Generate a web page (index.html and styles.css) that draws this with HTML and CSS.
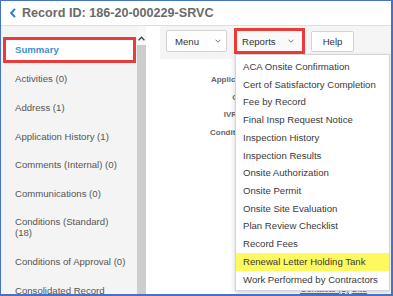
FILE: index.html
```html
<!DOCTYPE html>
<html>
<head>
<meta charset="utf-8">
<link rel="stylesheet" href="styles.css">
</head>
<body>
<div class="frame">
  <header class="hdr">
    <svg class="back" width="6" height="10" viewBox="0 0 6 10"><path d="M5 0.8 L1.2 5 L5 9.2" fill="none" stroke="#2b7fd3" stroke-width="2"/></svg>
    <h1 class="title">Record ID: 186-20-000229-SRVC</h1>
  </header>
  <div class="body">
    <nav class="side">
      <ul class="side-list">
        <li class="side-item active">Summary</li>
        <li class="side-item">Activities (0)</li>
        <li class="side-item">Address (1)</li>
        <li class="side-item">Application History (1)</li>
        <li class="side-item">Comments (Internal) (0)</li>
        <li class="side-item">Communications (0)</li>
        <li class="side-item">Conditions (Standard)<br>(18)</li>
        <li class="side-item">Conditions of Approval (0)</li>
        <li class="side-item">Consolidated Record<br>Activities (1)</li>
      </ul>
    </nav>
    <div class="scroll">
      <div class="scroll-btn">
        <svg width="7" height="5" viewBox="0 0 7 5"><path d="M0.6 4.3 L3.5 1.2 L6.4 4.3" fill="none" stroke="#444" stroke-width="1.3"/></svg>
      </div>
      <div class="scroll-track"></div>
    </div>
    <main class="main">
      <div class="toolbar">
        <button class="btn btn-menu">Menu <svg width="6" height="4" viewBox="0 0 6 4"><path d="M0.5 0.7 L3 3.2 L5.5 0.7" fill="none" stroke="#777" stroke-width="1"/></svg></button>
        <div class="dd">
          <button class="btn btn-reports">Reports <svg width="6" height="4" viewBox="0 0 6 4"><path d="M0.5 0.7 L3 3.2 L5.5 0.7" fill="none" stroke="#777" stroke-width="1"/></svg></button>
          <ul class="dd-menu">
            <li class="dd-item">ACA Onsite Confirmation</li>
            <li class="dd-item">Cert of Satisfactory Completion</li>
            <li class="dd-item">Fee by Record</li>
            <li class="dd-item">Final Insp Request Notice</li>
            <li class="dd-item">Inspection History</li>
            <li class="dd-item">Inspection Results</li>
            <li class="dd-item">Onsite Authorization</li>
            <li class="dd-item">Onsite Permit</li>
            <li class="dd-item">Onsite Site Evaluation</li>
            <li class="dd-item">Plan Review Checklist</li>
            <li class="dd-item">Record Fees</li>
            <li class="dd-item hl">Renewal Letter Holding Tank</li>
            <li class="dd-item">Work Performed by Contractors</li>
          </ul>
        </div>
        <button class="btn btn-help">Help</button>
      </div>
      <div class="form">
        <div class="label">Applicant:</div>
        <div class="label">City:</div>
        <div class="label">IVR ID:</div>
        <div class="label">Condition:</div>
      </div>
      <div class="links"><span class="link">Contacts (1)</span> <span class="link">Site</span></div>
    </main>
  </div>
</div>
</body>
</html>
```

FILE: styles.css
```css
html, body {
  margin: 0;
  padding: 0;
}
body {
  font-family: "Liberation Sans", Arial, sans-serif;
  background: #fff;
}
.frame {
  width: 393px;
  height: 296px;
  box-sizing: border-box;
  border-style: solid;
  border-color: #4472c4;
  border-width: 1px 2px 2px 1px;
  overflow: hidden;
  display: flex;
  flex-direction: column;
  background: #fff;
}
.hdr {
  flex: none;
  height: 24px;
  display: flex;
  align-items: center;
  gap: 6px;
  padding-left: 9px;
  border-bottom: 1px solid #dedede;
}
.back {
  display: block;
}
.title {
  margin: 0;
  font-size: 12.6px;
  font-weight: bold;
  color: #6a6a6a;
  white-space: nowrap;
}
.body {
  flex: 1;
  min-height: 0;
  display: flex;
}
.side {
  flex: none;
  width: 136px;
  background: #f4f4f4;
}
.side-list {
  list-style: none;
  margin: 0;
  padding: 10px 0 0 0;
}
.side-item {
  font-size: 9.6px;
  line-height: 11px;
  color: #555;
  padding: 8.8px 4px 8.8px 14px;
}
.side-item.active {
  margin: 1px 1px 2px 2px;
  border: 3px solid #ea3a3a;
  background: #fff;
  padding: 4.3px 4px 4.3px 9px;
  color: #3d8fd4;
  font-weight: bold;
}
.scroll {
  flex: none;
  width: 9px;
  display: flex;
  flex-direction: column;
  background: #cdcdcd;
}
.scroll-btn {
  flex: none;
  height: 19px;
  background: #f7f7f7;
  display: flex;
  justify-content: center;
  padding-top: 10px;
  box-sizing: border-box;
}
.scroll-btn svg {
  display: block;
}
.scroll-track {
  flex: 1;
}
.main {
  flex: 1;
  min-width: 0;
  padding-left: 14px;
  display: flex;
  flex-direction: column;
}
.toolbar {
  flex: none;
  height: 33px;
  box-sizing: border-box;
  background: #f5f5f5;
  display: flex;
  align-items: flex-start;
  padding: 4px 0 0 6px;
}
.btn {
  font-family: "Liberation Sans", Arial, sans-serif;
  font-size: 9.6px;
  color: #333;
  background: #fff;
  border: 1px solid #d2d2d2;
  border-radius: 2px;
  box-sizing: border-box;
  display: flex;
  align-items: center;
  margin: 0;
}
.btn svg {
  display: block;
}
.btn-menu {
  width: 61px;
  height: 22px;
  justify-content: space-between;
  padding: 0 5px 0 8px;
  margin-right: 7px;
}
.dd {
  position: relative;
  margin-top: -2px;
  margin-right: 6px;
}
.btn-reports {
  width: 71px;
  height: 26px;
  border: 3px solid #ea3a3a;
  border-radius: 0;
  background: #f9f9f9;
  justify-content: space-between;
  padding: 0 8px 0 5px;
}
.btn-help {
  width: 43px;
  height: 21px;
  justify-content: center;
  margin-top: 1px;
}
.dd-menu {
  position: absolute;
  top: 100%;
  left: 1px;
  width: 155px;
  box-sizing: border-box;
  margin: 0;
  padding: 3px 0 1px 0;
  list-style: none;
  background: #fff;
  border: 1px solid #d4d4d4;
  box-shadow: 0 2px 5px rgba(0, 0, 0, 0.18);
  z-index: 2;
}
.dd-item {
  font-size: 9.6px;
  line-height: 17.7px;
  color: #3a3a3a;
  padding-left: 7px;
  white-space: nowrap;
}
.dd-item.hl {
  background: #fdf95e;
  line-height: 18.4px;
}
.form {
  margin-top: 12px;
  display: grid;
  grid-template-columns: 90px;
}
.label {
  font-size: 8px;
  font-weight: bold;
  line-height: 17.5px;
  color: #666;
  text-align: right;
  white-space: nowrap;
}
.links {
  margin-top: auto;
  padding-left: 140px;
  font-size: 9px;
  line-height: 10px;
  white-space: nowrap;
}
.link {
  color: #2b7fd3;
  text-decoration: underline;
}
```
